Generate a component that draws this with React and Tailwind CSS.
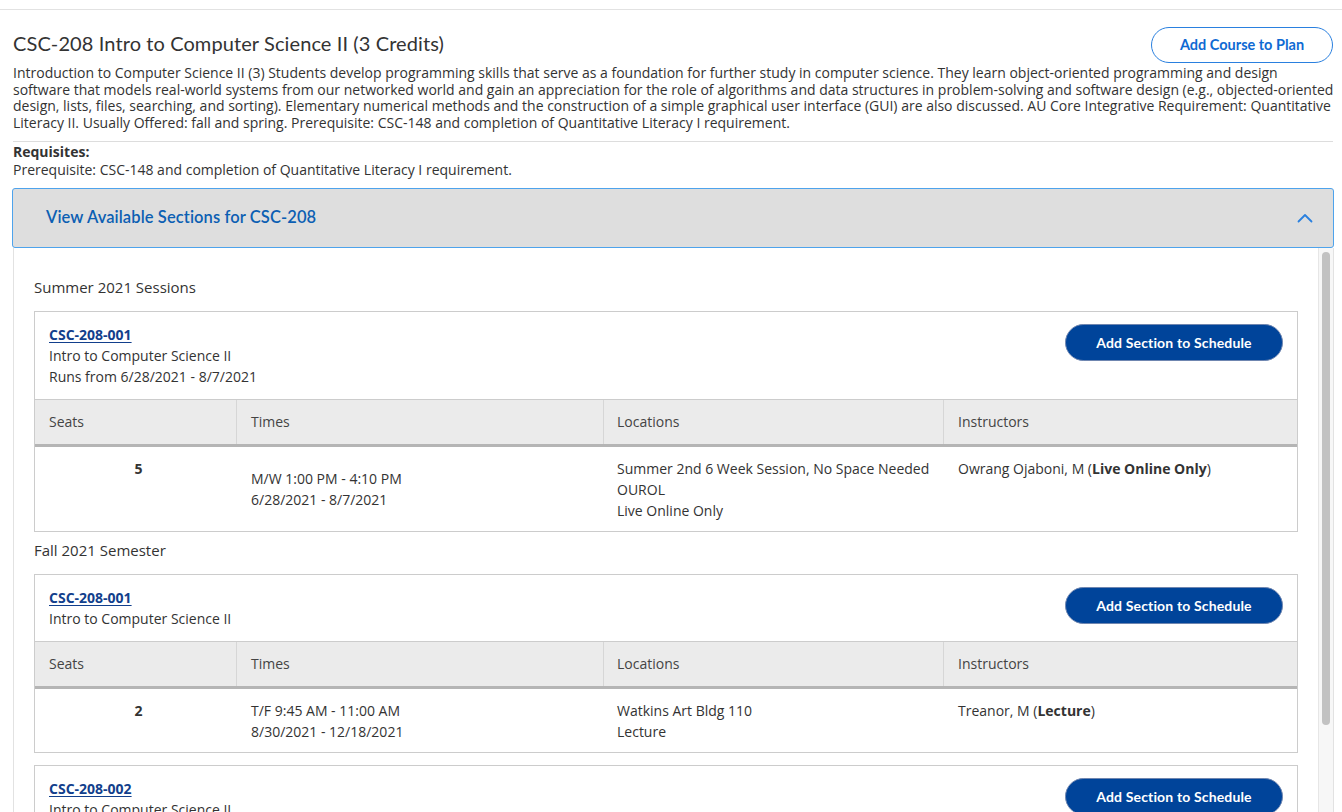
import React from 'react';

const descLines = [
  'Introduction to Computer Science II (3) Students develop programming skills that serve as a foundation for further study in computer science. They learn object-oriented programming and design',
  'software that models real-world systems from our networked world and gain an appreciation for the role of algorithms and data structures in problem-solving and software design (e.g., objected-oriented',
  'design, lists, files, searching, and sorting). Elementary numerical methods and the construction of a simple graphical user interface (GUI) are also discussed. AU Core Integrative Requirement: Quantitative',
  'Literacy II. Usually Offered: fall and spring. Prerequisite: CSC-148 and completion of Quantitative Literacy I requirement.',
];

const terms = [
  {
    name: 'Summer 2021 Sessions',
    sections: [
      {
        id: 'CSC-208-001',
        title: 'Intro to Computer Science II',
        runs: 'Runs from 6/28/2021 - 8/7/2021',
        seats: '5',
        times: ['M/W 1:00 PM - 4:10 PM', '6/28/2021 - 8/7/2021'],
        locations: ['Summer 2nd 6 Week Session, No Space Needed', 'OUROL', 'Live Online Only'],
        instructor: 'Owrang Ojaboni, M',
        type: 'Live Online Only',
      },
    ],
  },
  {
    name: 'Fall 2021 Semester',
    sections: [
      {
        id: 'CSC-208-001',
        title: 'Intro to Computer Science II',
        seats: '2',
        times: ['T/F 9:45 AM - 11:00 AM', '8/30/2021 - 12/18/2021'],
        locations: ['Watkins Art Bldg 110', 'Lecture'],
        instructor: 'Treanor, M',
        type: 'Lecture',
      },
      {
        id: 'CSC-208-002',
        title: 'Intro to Computer Science II',
        seats: '2',
        times: ['T/F 11:20 AM - 12:35 PM', '8/30/2021 - 12/18/2021'],
        locations: ['Watkins Art Bldg 110', 'Lecture'],
        instructor: 'Treanor, M',
        type: 'Lecture',
      },
    ],
  },
];

const SectionCard = ({ s }) => (
  <div className="border border-[#cccccc] bg-white">
    {/* Card head */}
    <div className="flex items-start justify-between pl-[14px] pr-[14px] pt-[12px] pb-[12px]">
      <div className="text-[14px] leading-[21px]">
        <a href="#" className="block font-bold text-[14px] text-[#123f8c] underline underline-offset-2">{s.id}</a>
        <div>{s.title}</div>
        {s.runs && <div>{s.runs}</div>}
      </div>
      <button className="h-[37px] w-[218px] rounded-full bg-[#00449a] border border-[#6f86b0] text-white text-[14px] font-bold font-['Lato'] tracking-[0.15px]">
        Add Section to Schedule
      </button>
    </div>

    {/* Table */}
    <div className="text-[14px] leading-[21px]">
      <div className="flex h-[48px] bg-[#ebebeb] border-t border-[#cccccc] border-b-[3px] border-b-[#b5b5b5] text-[#444]">
        <div className="w-[201px] pl-[14px] flex items-center">Seats</div>
        <div className="w-[367px] pl-[14px] flex items-center border-l border-[#d6d6d6]">Times</div>
        <div className="w-[340px] pl-[13px] flex items-center border-l border-[#d6d6d6]">Locations</div>
        <div className="flex-1 pl-[14px] flex items-center border-l border-[#d6d6d6]">Instructors</div>
      </div>
      <div className="flex pt-[11px] pb-[10px]">
        <div className="w-[201px] text-center font-bold pl-[6px]">{s.seats}</div>
        <div className="w-[367px] pl-[15px] flex flex-col justify-center">
          {s.times.map((t) => <div key={t}>{t}</div>)}
        </div>
        <div className="w-[340px] pl-[14px]">
          {s.locations.map((l) => <div key={l}>{l}</div>)}
        </div>
        <div className="flex-1 pl-[15px]">
          {s.instructor} (<span className="font-bold">{s.type}</span>)
        </div>
      </div>
    </div>
  </div>
);

export default function App() {
  return (
    <div className="h-screen overflow-hidden bg-white text-[#333] font-['Open_Sans',sans-serif]">
      <div className="h-[10px] border-b border-[#e2e2e2]" />

      <div className="pl-[13px] pr-[9px]">
        {/* Title row */}
        <div className="flex items-start justify-between mt-[17px]">
          <h1 className="text-[20px] leading-[28px] mt-[2px] font-['Lato'] text-[#333] tracking-[0.1px]">CSC-208 Intro to Computer Science II (3 Credits)</h1>
          <button className="h-[36px] w-[182px] rounded-full border border-[#2a80df] text-[#0f6ad3] text-[14.5px] font-bold font-['Lato']">
            Add Course to Plan
          </button>
        </div>

        <div className="text-[14px] leading-[16.7px] mt-[2px]">
          {descLines.map((l) => (
            <div key={l} className="whitespace-nowrap">{l}</div>
          ))}
        </div>

        <div className="border-t border-[#dddddd] mt-[9px]" />

        <div className="text-[14px] leading-[18px] mt-[1px]">
          <div className="font-bold">Requisites:</div>
          <div>Prerequisite: CSC-148 and completion of Quantitative Literacy I requirement.</div>
        </div>
      </div>

      {/* Accordion */}
      <div className="ml-[12px] mr-[8px] mt-[9px]">
        <div className="h-[60px] bg-[#dedede] border border-[#4ea3ec] rounded-[3px] flex items-center justify-between pl-[33px] pr-[20px]">
          <span className="text-[16.5px] font-['Lato'] font-semibold text-[#0c5fb3] tracking-[0.1px]">View Available Sections for CSC-208</span>
          <svg width="16" height="10" viewBox="0 0 16 10" fill="none" stroke="#2a80df" strokeWidth="1.8" strokeLinecap="round" strokeLinejoin="round">
            <path d="M1.5 8.5 8 2l6.5 6.5" />
          </svg>
        </div>

        <div className="flex ml-[1px] border-l border-r border-[#e2e2e2] h-[600px]">
          <div className="flex-1 pl-[20px] pr-[20px] overflow-hidden">
            {terms.map((term, ti) => (
              <div key={term.name} className={ti === 0 ? 'pt-[30px]' : 'pt-[9px]'}>
                <div className="text-[15px] leading-[18px] mb-[15px]">{term.name}</div>
                <div className="flex flex-col gap-[12px]">
                  {term.sections.map((s, i) => <SectionCard key={s.id + i} s={s} />)}
                </div>
              </div>
            ))}
          </div>
          {/* scrollbar */}
          <div className="w-[15px] bg-[#f7f7f7] border-l border-[#e6e6e6] pt-[4px] pl-[3px]">
            <div className="w-[8px] h-[473px] rounded-full bg-[#c2c2c2]" />
          </div>
        </div>
      </div>
    </div>
  );
}
